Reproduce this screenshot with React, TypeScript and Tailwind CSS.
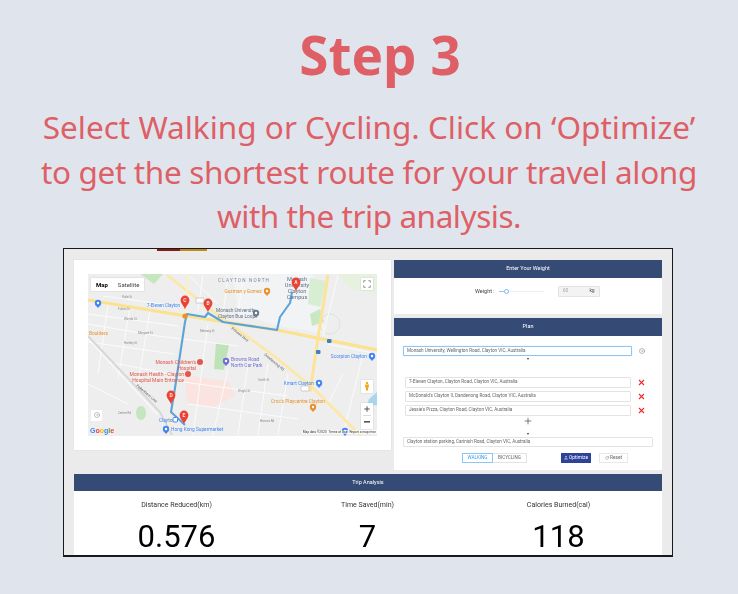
import React from "react";
import { Plus, RotateCw, FlaskConical, CircleDot } from "lucide-react";

function Pin({ x, y, l }: { x: number; y: number; l: string }) {
  return (
    <g transform={`translate(${x} ${y})`}>
      <path d="M0 7.5C-.8 4-4.4 1.6-4.4-2a4.4 4.4 0 0 1 8.8 0C4.4 1.6.8 4 0 7.5Z" fill="#ea4335" />
      <text x="0" y="0" textAnchor="middle" fontSize="5" fill="#fde3e0" fontWeight="700" fontFamily="Roboto, sans-serif">{l}</text>
    </g>
  );
}

function Poi({ x, y, c, label, anchor = "start" }: { x: number; y: number; c: string; label?: string; anchor?: "start" | "end" }) {
  return (
    <g>
      <circle cx={x} cy={y} r="3.2" fill={c} />
      <path d={`M${x - 2.4} ${y + 2.2}L${x} ${y + 5}L${x + 2.4} ${y + 2.2}Z`} fill={c} />
      <circle cx={x} cy={y} r="1.2" fill="#fff" />
      {label ? (
        <text x={x + (anchor === "start" ? 5 : -5)} y={y + 2} textAnchor={anchor} fontSize="4.8" fill={c} fontFamily="Roboto, sans-serif">{label}</text>
      ) : null}
    </g>
  );
}

function MapArt() {
  const minors = [
    "M0 50L70 62L150 72", "M0 68L86 80", "M0 40L90 52", "M20 30L10 100", "M42 33L30 105", "M62 36L50 110",
    "M120 50L105 161", "M140 95L125 161", "M160 90L150 161", "M180 90L170 161", "M200 100L190 161",
    "M100 130L210 145", "M95 108L200 122", "M100 1L130 30", "M115 1L110 36", "M140 1L135 40", "M155 1L150 42",
    "M240 70L289 80", "M250 1L235 62", "M275 80L255 161", "M255 100L240 130", "M0 110L40 130", "M20 88L82 100",
    "M10 12L30 14", "M15 22L75 30",
  ];
  const streets: [number, number, string][] = [
    [34, 24, "Kaile St"], [30, 36, "Fulton St"], [36, 46, "Wanda St"], [50, 60, "Margate St"], [36, 70, "Hartley St"],
    [112, 58, "Meriang St"], [170, 107, "Smith St"], [150, 118, "Wright St"], [172, 148, "Browns Rd"], [30, 140, "Centre Rd"],
  ];
  return (
    <svg viewBox="0 0 289 162" className="block w-full h-full">
      <rect width="289" height="162" fill="#eeeeee" />
      <path d="M145 0H225L238 60L190 52L150 40Z" fill="#f1f3f4" />
      <path d="M52 0L66 10L75 0Z" fill="#c6e6c0" />
      <path d="M250 0L289 0V20L262 15Z" fill="#e6f2df" />
      <path d="M222 40L232 35L236 48L224 52Z" fill="#c8e8c4" />
      <path d="M222 4L238 7L232 33L220 30Z" fill="#d8eed3" />
      <path d="M128 69L141 71L136 96L126 95Z" fill="#bfe3b8" />
      <path d="M96 101L141 108L147 122L124 134L100 130Z" fill="#fbe3e0" />
      <path d="M53 132a5 7 0 1 0 .1 0Z" fill="#c4e6be" />
      <path d="M281 125L289 118V131L279 132Z" fill="#a8d5f0" />
      <circle cx="242" cy="50" r="10" fill="none" stroke="#bfe0bb" strokeWidth=".5" />
      {minors.map((d, i) => (
        <path key={i} d={d} fill="none" stroke="#fbfbfb" strokeWidth="1" />
      ))}
      <path d="M0 62L72 138L84 161" fill="none" stroke="#d6d8db" strokeWidth="2" />
      <path d="M0 65L70 141" fill="none" stroke="#fff" strokeWidth="1" />
      <path d="M0 26L92 41L189 56L289 76" fill="none" stroke="#fbe28f" strokeWidth="3.2" />
      <path d="M79 1L132 43L185 81L225 114L272 161" fill="none" stroke="#fce8a6" strokeWidth="2.8" />
      <path d="M240 1L230 64L222 118" fill="none" stroke="#fce39a" strokeWidth="3" />
      <path d="M100 1L97 44L87 118L80 161" fill="none" stroke="#fdf0c0" strokeWidth="2" />
      <path d="M204 18L202 29L192 43L189 56L135 48L120 39L117 43L99 40L97 48L87 114L83 138L97 151" fill="none" stroke="#5ba3dc" strokeWidth="2.1" strokeLinejoin="round" />
      <g fontSize="3" fill="#8a8a8a" fontFamily="Roboto, sans-serif">
        {streets.map(([x, y, t]) => (
          <text key={t} x={x} y={y}>{t}</text>
        ))}
      </g>
      <rect x="239" y="65" width="4.5" height="4" rx="1" fill="#3f7fc4" />
      <rect x="228" y="76" width="4.5" height="4" rx="1" fill="#3f7fc4" />
      <rect x="213" y="112" width="8" height="5" rx="1" fill="#fff" stroke="#9aa0a6" strokeWidth=".5" />
      <text x="130" y="8" fontSize="4.6" letterSpacing="1.2" fill="#7c8a99" fontFamily="Roboto, sans-serif">CLAYTON NORTH</text>
      <g fontSize="5.6" fill="#5f6f85" textAnchor="middle" fontFamily="Roboto, sans-serif">
        <text x="209" y="7">Monash</text>
        <text x="209" y="13">University</text>
        <text x="209" y="19">Clayton</text>
        <text x="209" y="25">Campus</text>
      </g>
      <Poi x={179} y={17} c="#e8912d" label="Guzman y Gomez" anchor="end" />
      <Poi x={168} y={39} c="#6b7c8c" />
      <g fontSize="4.8" fill="#5f6f85" fontFamily="Roboto, sans-serif">
        <text x="128" y="38">Monash University</text>
        <text x="130" y="44">Clayton Bus Loop</text>
      </g>
      <Poi x={10} y={29} c="#4285f4" />
      <text x="92" y="33" textAnchor="end" fontSize="4.5" fill="#4285f4" fontFamily="Roboto, sans-serif">7-Eleven Clayton</text>
      <text x="1" y="61" fontSize="4.8" fill="#e8912d" fontFamily="Roboto, sans-serif">Boulders</text>
      <Poi x={284} y={82} c="#4285f4" label="Scorpion Clayton" anchor="end" />
      <Poi x={138} y={87} c="#6f6fd6" />
      <g fontSize="4.8" fill="#6f6fd6" fontFamily="Roboto, sans-serif">
        <text x="143" y="87">Browns Road</text>
        <text x="143" y="93">North Car Park</text>
      </g>
      <g fontSize="5" fill="#e2574c" textAnchor="end" fontFamily="Roboto, sans-serif">
        <text x="108" y="90">Monash Children's</text>
        <text x="108" y="96">Hospital</text>
        <text x="96" y="102">Monash Health - Clayton</text>
        <text x="96" y="108">Hospital Main Entrance</text>
      </g>
      <circle cx="112" cy="88" r="3" fill="#e2574c" />
      <circle cx="100" cy="100" r="3" fill="#e2574c" />
      <Poi x={231} y={109} c="#4285f4" label="Kmart Clayton" anchor="end" />
      <Poi x={225} y={133} c="#e8912d" />
      <text x="183" y="129" fontSize="4.8" fill="#e8912d" fontFamily="Roboto, sans-serif">Croc's Playcentre Clayton</text>
      <Poi x={257} y={157} c="#4285f4" />
      <Poi x={78} y={155} c="#4285f4" label="Hong Kong Supermarket" />
      <text x="71" y="148" fontSize="4.8" fill="#4285f4" fontFamily="Roboto, sans-serif">Clayton</text>
      <rect x="85" y="143.5" width="4.5" height="4.5" rx="1" fill="#fff" stroke="#4285f4" strokeWidth="1" />
      <circle cx="97" cy="42" r="2.6" fill="#e8912d" />
      <rect x="108" y="24" width="8" height="5" rx="1" fill="#fff" stroke="#9aa0a6" strokeWidth=".5" />
      <g fontSize="3.8" fill="#5d5d5d" fontFamily="Roboto, sans-serif">
        <text transform="translate(143 55) rotate(38)">Princes Hwy</text>
        <text transform="translate(176 81) rotate(40)">Dandenong Rd</text>
        <text transform="translate(48 112) rotate(40)">Pakenham Line</text>
      </g>
      <Pin x={208} y={10} l="A" />
      <Pin x={120} y={31} l="B" />
      <Pin x={97} y={28} l="C" />
      <Pin x={83} y={123} l="D" />
      <Pin x={96} y={143} l="E" />
    </svg>
  );
}

function Header({ children }: { children: React.ReactNode }) {
  return (
    <div className="h-[18px] bg-[#354b75] flex items-center justify-center text-[5.5px] text-white">{children}</div>
  );
}

function Stop({ text }: { text: string }) {
  return (
    <div className="flex items-center">
      <div className="ml-[11px] w-[226px] h-[11px] bg-white border border-[#e3e3e3] rounded-[1px] pl-[3px] pt-[1px] flex items-center text-[4.6px] text-[#666]">{text}</div>
      <svg viewBox="0 0 7 7" className="ml-[7px] w-[7px] h-[7px] shrink-0" fill="none" stroke="#f02a2a" strokeWidth="1.1">
        <path d="M1 1L6 6M6 1L1 6" />
      </svg>
    </div>
  );
}

function Stat({ title, value }: { title: string; value: string }) {
  return (
    <div className="flex flex-col items-center">
      <div className="text-[7px] leading-[9px] text-[#333] mt-[10px]">{title}</div>
      <div className="text-[31px] leading-[36px] text-black mt-[9px]">{value}</div>
    </div>
  );
}

export default function App() {
  return (
    <div className="w-[738px] h-[594px] bg-[#e0e5ed] flex flex-col items-center overflow-hidden font-['Noto_Sans',sans-serif] text-[#de5f66]">
      <h1 className="mt-[20px] ml-[22px] h-[70px] text-[53px] leading-[70px] font-bold">Step 3</h1>
      <p className="mt-[15px] w-[700px] text-center text-[31.5px] leading-[44.5px]">
        <span className="block whitespace-nowrap">Select Walking or Cycling. Click on ‘Optimize’</span>
        <span className="block whitespace-nowrap tracking-[-0.36px]">to get the shortest route for your travel along</span>
        <span className="block whitespace-nowrap tracking-[-0.45px]">with the trip analysis.</span>
      </p>
      <div className="relative mt-[9px] mr-[2px] w-[610px] h-[309px] border border-[#1a1a1a] border-b-2 bg-[#ebebeb] font-['Roboto',sans-serif] overflow-hidden px-[10px] pt-[11px] shrink-0 blur-[0.35px]">
        <div className="absolute left-[93px] top-0 h-[2px] w-[23px] bg-[#8a1a12]" />
        <div className="absolute left-[116px] top-0 h-[2px] w-[27px] bg-[#c08a1c]" />
        <div className="flex items-start gap-[3px]">
          <div className="w-[317px] h-[190px] bg-white p-[14px] shadow-[0_0_1px_#ccc]">
            <div className="relative w-[289px] h-[162px]">
              <MapArt />
              <div className="absolute left-[3px] top-[4px] h-[13px] flex bg-white text-[6px] text-[#444] items-center shadow-[0_0_1px_#aaa]">
                <span className="px-[5px] font-bold text-black">Map</span>
                <span className="px-[5px]">Satellite</span>
              </div>
              <div className="absolute right-[4px] top-[4px] w-[12px] h-[12px] bg-white flex items-center justify-center text-[#666] shadow-[0_0_1px_#aaa]">
                <svg viewBox="0 0 12 12" className="w-[8px] h-[8px]" fill="none" stroke="currentColor" strokeWidth="1"><path d="M1 4V1h3M8 1h3v3M11 8v3H8M4 11H1V8" /></svg>
              </div>
              <div className="absolute right-[4px] top-[106px] w-[12px] h-[13px] bg-white flex items-center justify-center shadow-[0_0_1px_#aaa]">
                <svg viewBox="0 0 8 12" className="w-[6px] h-[10px]" fill="#f3a81c"><circle cx="4" cy="2" r="1.6" /><path d="M1.5 4h5v4H5.4v4H2.6V8H1.5Z" /></svg>
              </div>
              <div className="absolute right-[4px] top-[129px] w-[12px] h-[26px] bg-white flex flex-col items-center justify-center text-[#555] shadow-[0_0_1px_#aaa]">
                <Plus className="w-[8px] h-[8px]" strokeWidth={3} />
                <div className="w-[8px] h-px bg-[#ddd] my-[2px]" />
                <svg viewBox="0 0 8 8" className="w-[8px] h-[8px]"><rect x="1" y="3" width="6" height="1.6" fill="currentColor" /></svg>
              </div>
              <div className="absolute left-[3px] top-[136px] w-[11px] h-[11px] bg-white flex items-center justify-center text-[#888]">
                <CircleDot className="w-[6px] h-[6px]" />
              </div>
              <div className="absolute left-[2px] bottom-[1px] text-[7px] leading-[8px] font-bold font-['Liberation_Sans',sans-serif]">
                <span className="text-[#4285f4]">G</span><span className="text-[#ea4335]">o</span><span className="text-[#fbbc05]">o</span><span className="text-[#4285f4]">g</span><span className="text-[#34a853]">l</span><span className="text-[#ea4335]">e</span>
              </div>
              <div className="absolute right-0 bottom-[2px] bg-white/70 text-[3.2px] leading-[4px] text-[#333] flex gap-[2px] px-px">
                <span>Map data ©2020</span><span>Terms of Use</span><span>Report a map error</span>
              </div>
            </div>
          </div>

          <div className="w-[268px] flex flex-col gap-[4px]">
            <div className="bg-white h-[54px]">
              <Header>Enter Your Weight</Header>
              <div className="flex items-center h-[11px] mt-[8px] pl-[81px]">
                <span className="text-[5.5px] text-[#444]">Weight :</span>
                <div className="relative ml-[4px] w-[45px] h-[1px] bg-[#eee]">
                  <div className="absolute left-0 top-0 w-[6px] h-[1px] bg-[#8fc7f5]" />
                  <div className="absolute left-[5px] top-[-2px] w-[5px] h-[5px] rounded-full bg-white border border-[#7cbcf2]" />
                </div>
                <div className="ml-[14px] w-[42px] h-[11px] bg-[#f3f3f3] border border-[#e3e3e3] rounded-[1px] flex items-center justify-between px-[4px] text-[5px] text-[#aaa]">
                  <span>60</span><span className="text-[#555]">kg</span>
                </div>
              </div>
            </div>
            <div className="bg-white h-[152px]">
              <Header>Plan</Header>
              <div className="flex items-center mt-[10px] ml-[9px]">
                <div className="w-[229px] h-[10px] bg-white border border-[#8cc6f7] shadow-[0_0_1px_#8cc6f7] rounded-[1px] pl-[3px] pt-[1px] flex items-center text-[4.6px] text-[#666]">
                  Monash University, Wellington Road, Clayton VIC, Australia
                </div>
                <CircleDot className="ml-[7px] w-[6px] h-[6px] text-[#777]" />
              </div>
              <div className="ml-[133px] mt-[2px] w-0 h-0 border-x-[1.5px] border-x-transparent border-t-[2px] border-t-[#333]" />
              <div className="mt-[17px] flex flex-col gap-[3px]">
                <Stop text="7-Eleven Clayton, Clayton Road, Clayton VIC, Australia" />
                <Stop text="McDonald's Clayton II, Dandenong Road, Clayton VIC, Australia" />
                <Stop text="Jessie's Pizza, Clayton Road, Clayton VIC, Australia" />
              </div>
              <div className="flex justify-center w-[268px]">
                <Plus className="w-[10px] h-[10px] text-[#333]" strokeWidth={1.5} />
              </div>
              <div className="ml-[133px] mt-[7px] w-0 h-0 border-x-[1.5px] border-x-transparent border-t-[2px] border-t-[#333]" />
              <div className="ml-[9px] mt-[2px] w-[250px] h-[10px] bg-white border border-[#e3e3e3] rounded-[1px] pl-[3px] pt-[1px] flex items-center text-[4.6px] text-[#666]">
                Clayton station parking, Carinish Road, Clayton VIC, Australia
              </div>
              <div className="flex items-center mt-[6px] ml-[68px] h-[10px]">
                <div className="w-[31px] h-[10px] border border-[#8cc6f7] pt-[1px] text-[#3d9bf0] text-[4.6px] flex items-center justify-center">WALKING</div>
                <div className="w-[34px] h-[10px] border border-l-0 border-[#e3e3e3] pt-[1px] text-[#666] text-[4.6px] flex items-center justify-center">BICYCLING</div>
                <div className="ml-[34px] w-[30px] h-[10px] bg-[#2f429a] text-white text-[4.8px] flex items-center justify-center gap-[1px]">
                  <FlaskConical className="w-[4px] h-[4px]" />Optimize
                </div>
                <div className="ml-[8px] w-[29px] h-[10px] bg-white border border-[#e8e8e8] text-[#666] text-[4.8px] flex items-center justify-center gap-[1px]">
                  <RotateCw className="w-[4px] h-[4px]" />Reset
                </div>
              </div>
            </div>
          </div>
        </div>
        <div className="mt-[4px] w-[588px] h-[82px] bg-white">
          <div className="h-[17px] bg-[#354b75] flex items-center justify-center text-[5.5px] text-white">Trip Analysis</div>
          <div className="grid grid-cols-3 pl-[7px] pr-[8px]">
            <Stat title="Distance Reduced(km)" value="0.576" />
            <Stat title="Time Saved(min)" value="7" />
            <Stat title="Calories Burned(cal)" value="118" />
          </div>
        </div>
      </div>
    </div>
  );
}
